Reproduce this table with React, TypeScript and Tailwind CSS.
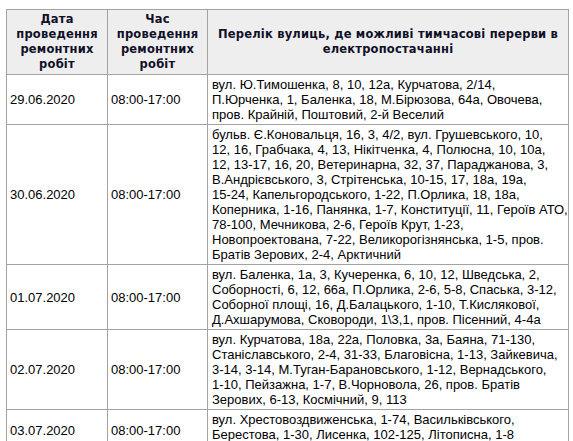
type Row = { date: string; time: string; lines: string[]; last?: boolean };

const ROWS: Row[] = [
  {
    date: '29.06.2020',
    time: '08:00-17:00',
    lines: [
      'вул. Ю.Тимошенка, 8, 10, 12а, Курчатова, 2/14,',
      'П.Юрченка, 1, Баленка, 18, М.Бірюзова, 64а, Овочева,',
      'пров. Крайній, Поштовий, 2-й Веселий',
    ],
  },
  {
    date: '30.06.2020',
    time: '08:00-17:00',
    lines: [
      'бульв. Є.Коновальця, 16, 3, 4/2, вул. Грушевського, 10,',
      '12, 16, Грабчака, 4, 13, Нікітченка, 4, Полюсна, 10, 10а,',
      '12, 13-17, 16, 20, Ветеринарна, 32, 37, Параджанова, 3,',
      'В.Андрієвського, 3, Стрітенська, 10-15, 17, 18а, 19а,',
      '15-24, Капельгородського, 1-22, П.Орлика, 18, 18а,',
      'Коперника, 1-16, Панянка, 1-7, Конституції, 11, Героїв АТО,',
      '78-100, Мечникова, 2-6, Героїв Крут, 1-23,',
      'Новопроектована, 7-22, Великорогізнянська, 1-5, пров.',
      'Братів Зерових, 2-4, Арктичний',
    ],
  },
  {
    date: '01.07.2020',
    time: '08:00-17:00',
    lines: [
      'вул. Баленка, 1а, 3, Кучеренка, 6, 10, 12, Шведська, 2,',
      'Соборності, 6, 12, 66а, П.Орлика, 2-6, 5-8, Спаська, 3-12,',
      'Соборної площі, 16, Д.Балацького, 1-10, Т.Кислякової,',
      'Д.Ахшарумова, Сковороди, 1\\3,1, пров. Пісенний, 4-4а',
    ],
  },
  {
    date: '02.07.2020',
    time: '08:00-17:00',
    lines: [
      'вул. Курчатова, 18а, 22а, Половка, 3а, Баяна, 71-130,',
      'Станіславського, 2-4, 31-33, Благовісна, 1-13, Зайкевича,',
      '3-14, 3-14, М.Туган-Барановського, 1-12, Вернадського,',
      '1-10, Пейзажна, 1-7, В.Чорновола, 26, пров. Братів',
      'Зерових, 6-13, Космічний, 9, 113',
    ],
  },
  {
    date: '03.07.2020',
    time: '08:00-17:00',
    lines: [
      'вул. Хрестовоздвиженська, 1-74, Васильківського,',
      'Берестова, 1-30, Лисенка, 102-125, Літописна, 1-8',
    ],
    last: true,
  },
];

const TH = 'border border-[#a3a3a3] bg-[#eeeeee] px-[3px] py-[2px] text-center align-middle font-bold text-[#101028] text-[11.5px] leading-[15px] tracking-[0.2px] font-["DejaVu_Sans",Verdana,sans-serif]';
const TD = 'border border-[#a3a3a3] px-[3px] py-[2px] align-middle';

export default function App() {
  return (
    <div className="min-h-screen bg-white pl-[6px] pt-[9px] font-['Liberation_Sans',Arial,sans-serif] text-[13px] leading-[15px] text-black">
      <table className="w-[563px] border-collapse table-fixed">
        <colgroup>
          <col className="w-[101px]" />
          <col className="w-[100px]" />
          <col />
        </colgroup>
        <thead>
          <tr>
            <th className={TH}>Дата<br />проведення<br />ремонтних<br />робіт</th>
            <th className={TH}>Час<br />проведення<br />ремонтних<br />робіт</th>
            <th className={TH}>Перелік вулиць, де можливі тимчасові перерви в<br />електропостачанні</th>
          </tr>
        </thead>
        <tbody>
          {ROWS.map((r) => (
            <tr key={r.date} className={r.last ? 'h-[42px]' : undefined}>
              <td className={TD}>{r.date}</td>
              <td className={TD}>{r.time}</td>
              <td className={`${TD} px-[4px] whitespace-nowrap ${r.last ? '!align-top' : ''}`}>
                {r.lines.map((l, i) => (
                  <div key={i}>{l}</div>
                ))}
              </td>
            </tr>
          ))}
        </tbody>
      </table>
    </div>
  );
}
